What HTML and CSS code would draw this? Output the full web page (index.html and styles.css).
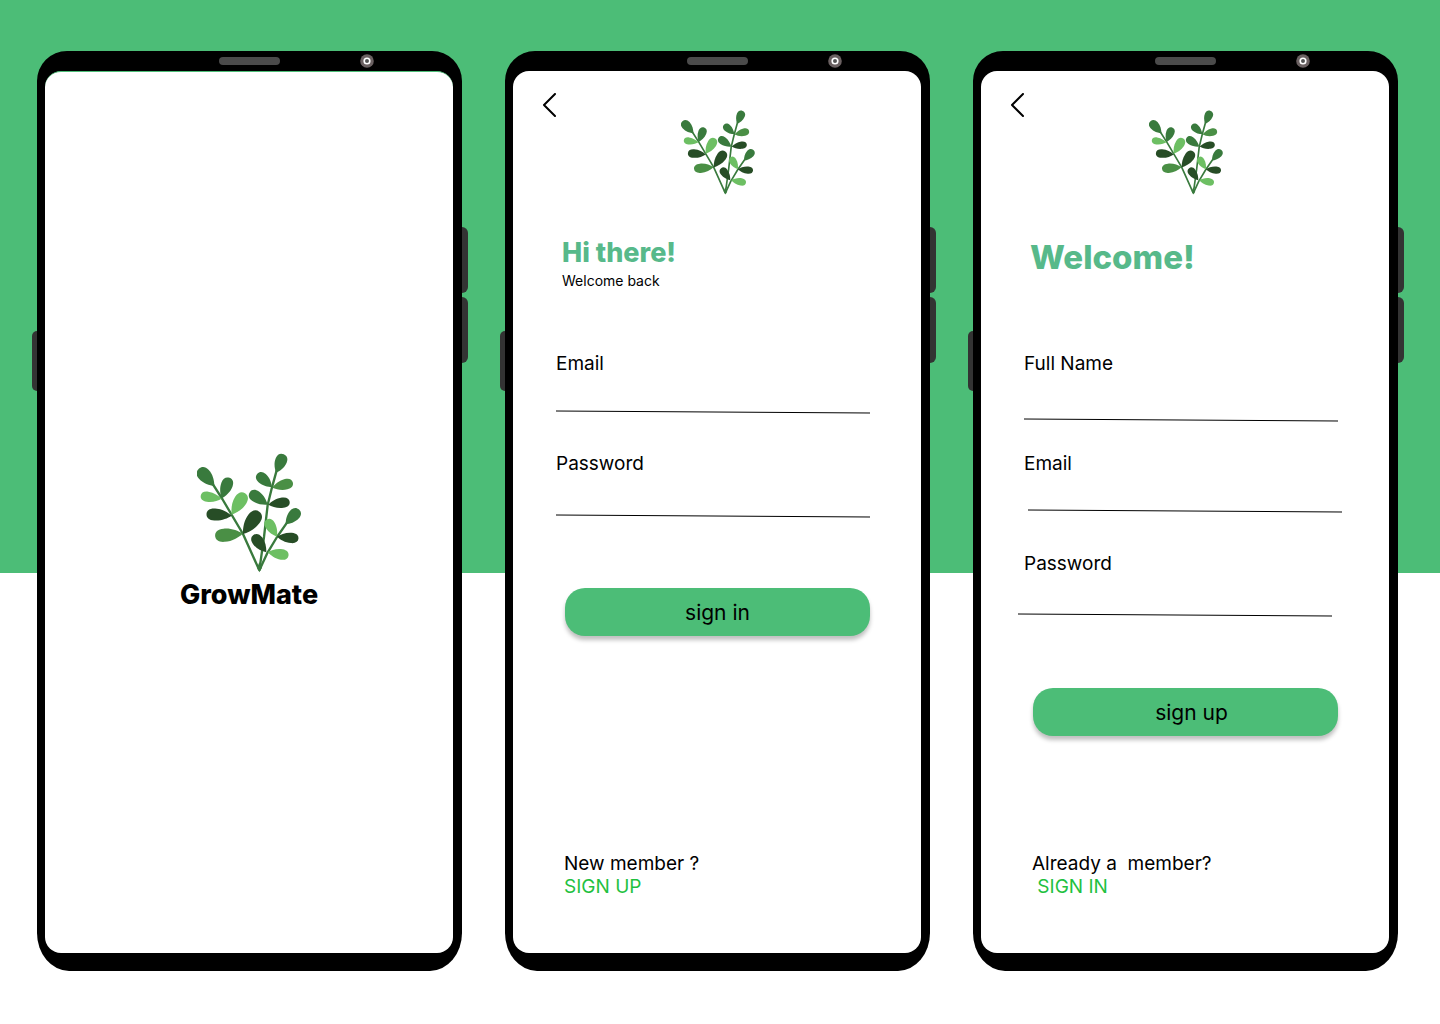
FILE: index.html
```html
<!DOCTYPE html>
<html lang="en">
<head>
<meta charset="utf-8">
<meta name="viewport" content="width=device-width, initial-scale=1">
<title>GrowMate</title>
<link rel="stylesheet" href="styles.css">
</head>
<body>
<svg class="sprite" aria-hidden="true">
  <defs>
    <path id="leaf" d="M0 0C10 -9 24 -18 41 -18C54 -18 61 -11 61 0C61 11 54 18 41 18C24 18 10 9 0 0Z"/>
    <symbol id="plant" viewBox="80 38 312 360">
      <g fill="none" stroke="#397a3d" stroke-width="7" stroke-linejoin="round">
        <path d="M124 126L156 176L218 281L267 390"/>
        <path d="M319 90L305 141L292 194L281 290L267 390"/>
        <path d="M350 247L320 290L290 340L267 390"/>
      </g>
      <path fill="#397a3d" d="M260 382L267 366L275 382L267 396Z"/>
      <g fill="#397a3d">
        <use href="#leaf" transform="translate(132 137) rotate(-132) scale(1.14 1.1)"/>
        <use href="#leaf" transform="translate(154 174) rotate(-69) scale(1.08 .98)"/>
        <use href="#leaf" transform="translate(317 97) rotate(-67) scale(.98 .98)"/>
        <use href="#leaf" transform="translate(305 140) rotate(-138) scale(.97 .9)"/>
        <use href="#leaf" transform="translate(292 193) rotate(-145) scale(1.07 .96)"/>
        <use href="#leaf" transform="translate(346 252) rotate(-48) scale(.98 .96)"/>
      </g>
      <g fill="#4a8f45">
        <use href="#leaf" transform="translate(217 280) rotate(175) scale(1.36 1.1)"/>
        <use href="#leaf" transform="translate(306 142) rotate(-14) scale(1.04 .88)"/>
      </g>
      <g fill="#6dbf63">
        <use href="#leaf" transform="translate(154 175) rotate(188) scale(1.04 .84)"/>
        <use href="#leaf" transform="translate(184 223) rotate(-58) scale(1.24 1.08)"/>
        <use href="#leaf" transform="translate(320 289) rotate(-121) scale(.98 .86)"/>
        <use href="#leaf" transform="translate(292 335) rotate(10) scale(1.04 .88)"/>
      </g>
      <g fill="#274d26">
        <use href="#leaf" transform="translate(184 226) rotate(184) scale(1.24 1)"/>
        <use href="#leaf" transform="translate(218 281) rotate(-54) scale(1.36 1.16)"/>
        <use href="#leaf" transform="translate(294 193) rotate(-8) scale(1.06 .86)"/>
        <use href="#leaf" transform="translate(320 289) rotate(5) scale(1.06 .86)"/>
        <use href="#leaf" transform="translate(288 336) rotate(-127) scale(1.06 .94)"/>
      </g>
    </symbol>
    <symbol id="back" viewBox="0 0 14 24">
      <path d="M13 1L2 12L13 23" fill="none" stroke="#000" stroke-width="2" stroke-linecap="round" stroke-linejoin="round"/>
    </symbol>
    <symbol id="lens" viewBox="0 0 14 14">
      <circle cx="7" cy="7" r="6.8" fill="#6b6162"/>
      <circle cx="7" cy="7" r="2.8" fill="#555" stroke="#fff" stroke-width="1.6"/>
    </symbol>
  </defs>
</svg>

<main class="showcase">
  <section class="phone">
    <div class="bezel"><span class="speaker"></span><svg class="camera" aria-hidden="true"><use href="#lens"/></svg></div>
    <div class="screen splash">
      <svg class="plant-large" aria-hidden="true"><use href="#plant"/></svg>
      <h1 class="brand">GrowMate</h1>
    </div>
    <span class="key key-up"></span><span class="key key-down"></span><span class="key key-power"></span>
  </section>

  <section class="phone" id="sign-in">
    <div class="bezel"><span class="speaker"></span><svg class="camera" aria-hidden="true"><use href="#lens"/></svg></div>
    <div class="screen">
      <header class="topbar">
        <button class="back" type="button" aria-label="Back"><svg class="back-icon" aria-hidden="true"><use href="#back"/></svg></button>
        <svg class="plant-small" aria-hidden="true"><use href="#plant"/></svg>
      </header>
      <div class="intro">
        <h2 class="greeting">Hi there!</h2>
        <p class="subtitle">Welcome back</p>
      </div>
      <form class="form">
        <div class="field">
          <label for="in-email">Email</label>
          <input class="short" id="in-email" type="email">
          <svg class="rule" viewBox="0 0 314 4" preserveAspectRatio="none" aria-hidden="true"><path d="M0 1L314 3"/></svg>
        </div>
        <div class="field">
          <label for="in-password">Password</label>
          <input class="medium" id="in-password" type="password">
          <svg class="rule" viewBox="0 0 314 4" preserveAspectRatio="none" aria-hidden="true"><path d="M0 1L314 3"/></svg>
        </div>
        <button class="submit" type="submit">sign in</button>
      </form>
      <footer class="switch">
        <p>New member ?</p>
        <a href="#sign-up">SIGN UP</a>
      </footer>
    </div>
    <span class="key key-up"></span><span class="key key-down"></span><span class="key key-power"></span>
  </section>

  <section class="phone" id="sign-up">
    <div class="bezel"><span class="speaker"></span><svg class="camera" aria-hidden="true"><use href="#lens"/></svg></div>
    <div class="screen">
      <header class="topbar">
        <button class="back" type="button" aria-label="Back"><svg class="back-icon" aria-hidden="true"><use href="#back"/></svg></button>
        <svg class="plant-small" aria-hidden="true"><use href="#plant"/></svg>
      </header>
      <div class="intro">
        <h2 class="greeting greeting-large">Welcome!</h2>
      </div>
      <form class="form">
        <div class="field">
          <label for="up-name">Full Name</label>
          <input class="tall" id="up-name" type="text">
          <svg class="rule" viewBox="0 0 314 4" preserveAspectRatio="none" aria-hidden="true"><path d="M0 1L314 3"/></svg>
        </div>
        <div class="field">
          <label for="up-email">Email</label>
          <input class="short" id="up-email" type="email">
          <svg class="rule" viewBox="0 0 314 4" preserveAspectRatio="none" aria-hidden="true"><path d="M4 0L318 2"/></svg>
        </div>
        <div class="field">
          <label for="up-password">Password</label>
          <input class="medium" id="up-password" type="password">
          <svg class="rule" viewBox="0 0 314 4" preserveAspectRatio="none" aria-hidden="true"><path d="M-6 0L308 2"/></svg>
        </div>
        <button class="submit submit-shifted" type="submit">sign up</button>
      </form>
      <footer class="switch">
        <p>Already a  member?</p>
        <a href="#sign-in"> SIGN IN</a>
      </footer>
    </div>
    <span class="key key-up"></span><span class="key key-down"></span><span class="key key-power"></span>
  </section>
</main>
</body>
</html>
```
FILE: styles.css
```css
* {
  box-sizing: border-box;
}

body {
  margin: 0;
  min-height: 100vh;
  background: linear-gradient(#4cbd77 56%, #fff 56%);
  color: #000;
  font-family: Inter, "Noto Sans", sans-serif;
}

h1,
h2,
p {
  margin: 0;
}

.sprite {
  position: absolute;
  width: 0;
  height: 0;
}

.showcase {
  display: grid;
  grid-template-columns: repeat(3, 1fr);
  gap: 43px;
  padding: 51px 42px 53px 37px;
}

/* Device frame */
.phone {
  position: relative;
  display: flex;
  flex-direction: column;
  min-height: calc(100vh - 104px);
  padding: 0 9px 18px 8px;
  border-radius: 30px 30px 32px 32px / 30px 30px 38px 38px;
  background: #000;
}

.bezel {
  display: grid;
  grid-template-columns: 1fr 61px 1fr;
  align-items: center;
  height: 20px;
}

.speaker {
  grid-column: 2;
  height: 8px;
  border-radius: 4px;
  background: #4b4b4b;
}

.camera {
  width: 14px;
  height: 14px;
  margin-left: 80px;
}

.key {
  position: absolute;
  right: -6px;
  width: 6px;
  height: 66px;
  border-radius: 0 6px 6px 0;
  background: #333;
}

.key-up {
  top: 176px;
}

.key-down {
  top: 246px;
}

.key-power {
  top: 280px;
  right: auto;
  left: -5px;
  width: 5px;
  height: 60px;
  border-radius: 6px 0 0 6px;
}

.screen {
  flex: 1;
  display: flex;
  flex-direction: column;
  border-radius: 16px;
  background: #fff;
}

/* Splash */
.splash {
  align-items: center;
  justify-content: center;
  gap: 6px;
  padding-top: 38px;
  border-top: 1px solid #4cbd77;
}

.plant-large {
  width: 104px;
  height: 120px;
}

.brand {
  font-size: 27px;
  line-height: 32px;
  font-weight: 800;
}

/* Sign in and sign up */
.topbar {
  display: grid;
  grid-template-columns: 1fr auto 1fr;
  align-items: start;
  padding: 22px 28px 0 29px;
}

.back {
  justify-self: start;
  display: flex;
  padding: 0;
  border: 0;
  background: none;
}

.back-icon {
  width: 14px;
  height: 24px;
}

.plant-small {
  width: 74px;
  height: 85px;
  margin-top: 17px;
}

.intro {
  min-height: 157px;
  padding: 42px 49px 0;
}

.greeting {
  color: #57b98a;
  font-size: 27px;
  line-height: 32px;
  font-weight: 800;
}

.greeting-large {
  font-size: 33px;
  line-height: 40px;
}

.subtitle {
  font-size: 14px;
  line-height: 24px;
}

.form {
  display: flex;
  flex-direction: column;
  padding: 0 51px 0 43px;
}

.field {
  display: flex;
  flex-direction: column;
  min-height: 100px;
}

.field label {
  font-size: 19px;
  line-height: 24px;
}

.field input {
  width: 100%;
  padding: 0;
  border: 0;
  outline: 0;
  background: none;
  font: inherit;
}

.short {
  height: 34px;
}

.medium {
  height: 38px;
}

.tall {
  height: 42px;
}

.rule {
  width: 100%;
  height: 4px;
  overflow: visible;
  fill: none;
  stroke: #000;
}

.submit {
  height: 48px;
  margin: 36px 0 0 9px;
  padding: 0;
  border: 0;
  border-radius: 20px;
  background: #4cbd77;
  box-shadow: 0 4px 4px rgba(0, 0, 0, 0.25);
  color: #000;
  font: inherit;
  font-size: 21px;
}

.submit-shifted {
  padding-left: 12px;
}

.switch {
  margin-top: auto;
  padding: 0 51px 55px;
  font-size: 19px;
  line-height: 23px;
}

.switch p,
.switch a {
  display: block;
  white-space: pre;
}

.switch a {
  color: #1fc13f;
  text-decoration: none;
}
```
